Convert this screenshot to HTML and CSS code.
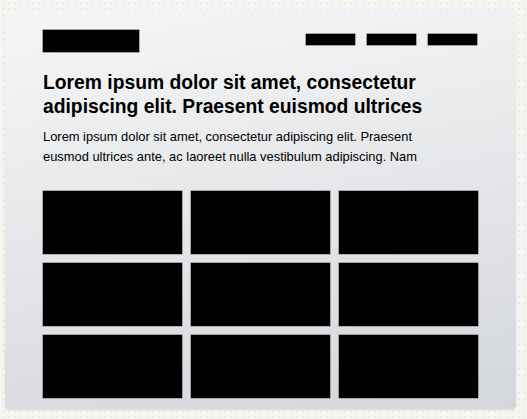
FILE: index.html
```html
<!DOCTYPE html>
<html>
<head>
<meta charset="utf-8">
<link rel="stylesheet" href="styles.css">
</head>
<body>
<div class="card">
  <header class="header">
    <div class="logo"></div>
    <nav class="nav">
      <span class="nav-item"></span>
      <span class="nav-item"></span>
      <span class="nav-item"></span>
    </nav>
  </header>
  <h1 class="title">Lorem ipsum dolor sit amet, consectetur adipiscing elit. Praesent euismod ultrices</h1>
  <p class="lead">Lorem ipsum dolor sit amet, consectetur adipiscing elit. Praesent eusmod ultrices ante, ac laoreet nulla vestibulum adipiscing. Nam</p>
  <div class="grid">
    <div class="tile"></div><div class="tile"></div><div class="tile"></div>
    <div class="tile"></div><div class="tile"></div><div class="tile"></div>
    <div class="tile"></div><div class="tile"></div><div class="tile"></div>
  </div>
</div>
</body>
</html>
```
FILE: styles.css
```css
html, body {
  margin: 0;
  height: 100%;
}
body {
  background-color: #f6f7f2;
  background-image: radial-gradient(circle, #e9ebe2 0.8px, transparent 1.2px);
  background-size: 6px 6px;
  padding: 9px 0 0 5px;
  box-sizing: border-box;
  font-family: "Liberation Sans", Arial, sans-serif;
  color: #000;
}
.card {
  width: 511px;
  height: 400px;
  box-sizing: border-box;
  padding: 21px 38px 0 38px;
  border-radius: 4px;
  background: linear-gradient(170deg, #f6f6f7 0%, #eaebed 35%, #d3d6db 100%);
  box-shadow: 0 1px 2px rgba(0,0,0,0.12);
}
.header {
  display: flex;
  justify-content: space-between;
  align-items: flex-start;
  height: 22px;
}
.logo {
  width: 96px;
  height: 22px;
  background: #000;
  box-shadow: 0 0 0 0.5px #555;
}
.nav {
  display: flex;
  gap: 12px;
  margin-top: 4px;
  margin-right: 1px;
}
.nav-item {
  display: block;
  width: 49px;
  height: 11px;
  background: #000;
  box-shadow: 0 0 0 0.5px #555;
}
.title {
  margin: 19px 0 0 0;
  font-size: 19.3px;
  line-height: 24px;
  font-weight: bold;
}
.lead {
  margin: 8px 0 0 0;
  max-width: 400px;
  font-size: 12.9px;
  line-height: 20px;
}
.grid {
  margin-top: 24px;
  display: grid;
  grid-template-columns: repeat(3, 1fr);
  grid-auto-rows: 63px;
  gap: 9px;
}
.tile {
  background: #000;
  box-shadow: 0 0 0 0.5px #666, 0 1px 0 rgba(255,255,255,0.7);
}
```
